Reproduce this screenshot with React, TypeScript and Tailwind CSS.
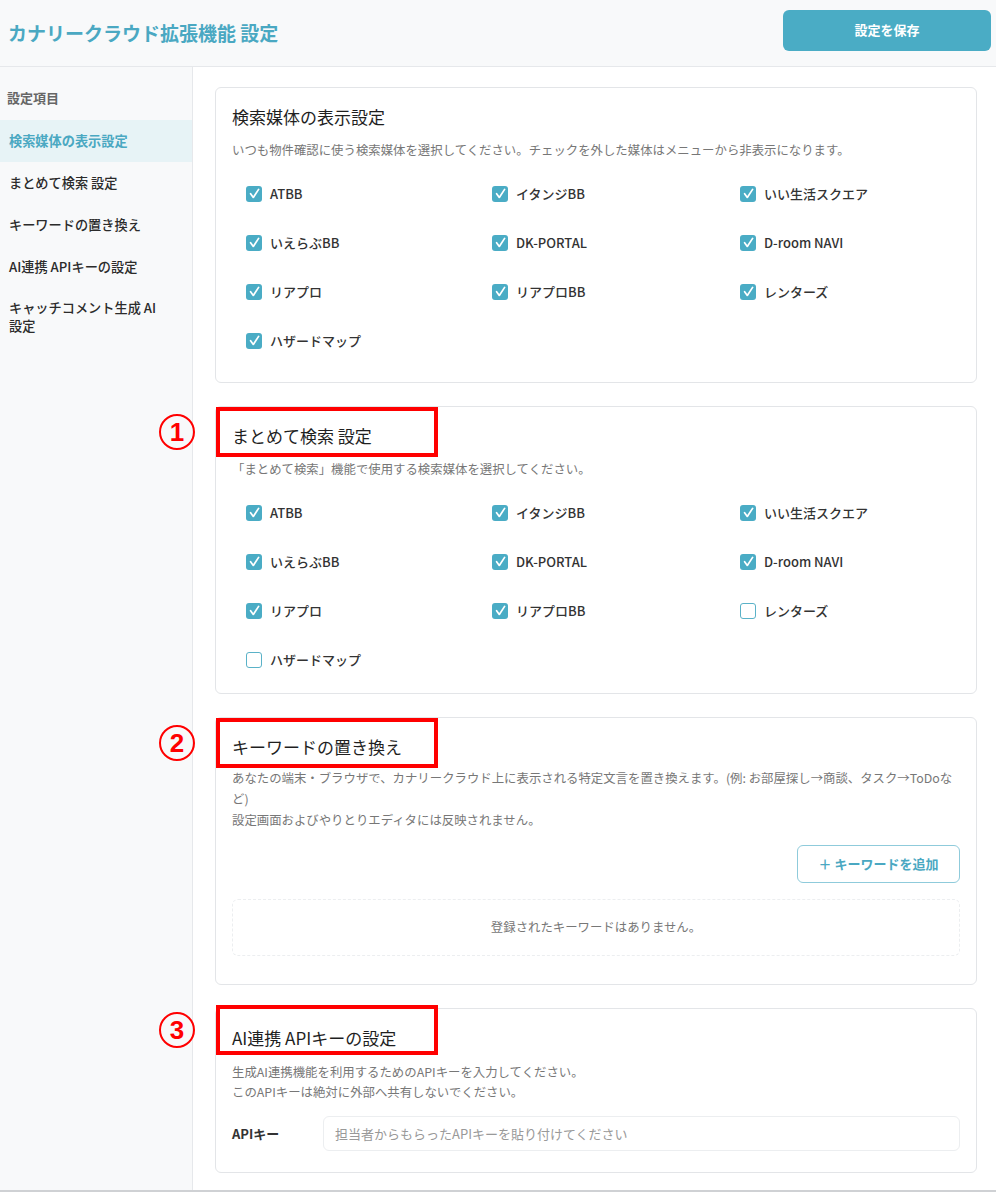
import React from "react";

const FONT = '"Noto Sans CJK JP", "Noto Sans", sans-serif';

type Item = { label: string; checked: boolean };

function Check({ checked }: { checked: boolean }) {
  if (checked) {
    return (
      <span className="flex h-[16px] w-[16px] shrink-0 items-center justify-center rounded-[3px] bg-[#4aacc5]">
        <svg width="13" height="13" viewBox="0 0 12 12" fill="none">
          <path d="M2.4 6.2 L4.9 9.6 L9.8 2.2" stroke="white" strokeWidth="1.6" strokeLinecap="round" strokeLinejoin="round" />
        </svg>
      </span>
    );
  }
  return <span className="h-[16px] w-[16px] shrink-0 rounded-[3px] border-[1.5px] border-[#5ab2c8] bg-white" />;
}

function CheckGrid({ items }: { items: Item[] }) {
  return (
    <div className="mt-[9px] grid grid-cols-[246px_248px_1fr] pl-[14px]">
      {items.map((it) => (
        <div key={it.label} className="flex h-[49px] items-center gap-[8px]">
          <Check checked={it.checked} />
          <span className="text-[13px] font-medium text-[#333]">{it.label}</span>
        </div>
      ))}
    </div>
  );
}

function Marker({ n, top }: { n: string; top: string }) {
  return (
    <div className={`pointer-events-none absolute left-0 ${top} h-[50px] w-[222px]`}>
      <div className="absolute inset-0 border-[4px] border-[#ff0000]" />
      <div className="absolute left-[-57px] top-1/2 flex h-[36px] w-[36px] -translate-y-1/2 items-center justify-center rounded-full border-[2px] border-[#ff0000]">
        <span className="text-[26px] font-bold leading-none text-[#ff0000]" style={{ fontFamily: '"Liberation Sans", Arial, sans-serif' }}>
          {n}
        </span>
      </div>
    </div>
  );
}

const names = ["ATBB", "イタンジBB", "いい生活スクエア", "いえらぶBB", "DK-PORTAL", "D-room NAVI", "リアプロ", "リアプロBB", "レンターズ", "ハザードマップ"];

export default function App() {
  const items1 = names.map((l) => ({ label: l, checked: true }));
  const items2 = names.map((l) => ({ label: l, checked: !(l === "レンターズ" || l === "ハザードマップ") }));
  const sideItems = ["まとめて検索 設定", "キーワードの置き換え", "AI連携 APIキーの設定"];

  return (
    <div className="min-h-[1192px] w-[996px] bg-white" style={{ fontFamily: FONT }}>
      <header className="flex h-[67px] items-center justify-between border-b border-[#e6e8eb] bg-[#f8f9fa] pl-[8px] pr-[5px]">
        <h1 className="text-[19px] font-bold text-[#4aa8c2]">カナリークラウド拡張機能 設定</h1>
        <button className="mb-[6px] h-[41px] w-[208px] rounded-[6px] bg-[#4aacc5] text-[13px] font-bold text-white">設定を保存</button>
      </header>
      <div className="flex border-b-2 border-[#cfd1d4]">
        <aside className="w-[193px] shrink-0 border-r border-[#e6e8eb] bg-[#f8f9fa]">
          <div className="px-[7px] pt-[21px] pb-[12px] text-[13px] font-bold text-[#666]">設定項目</div>
          <div className="flex h-[42px] items-center bg-[#e7f3f6] px-[9px] text-[13.2px] font-bold text-[#4aa8c2]">検索媒体の表示設定</div>
          {sideItems.map((s) => (
            <div key={s} className="flex h-[42px] items-center px-[9px] text-[13.2px] font-medium text-[#2b2b2b]">
              {s}
            </div>
          ))}
          <div className="pl-[9px] pr-[28px] pt-[11px] text-[13.2px] font-medium leading-[18px] text-[#2b2b2b]">キャッチコメント生成 AI 設定</div>
        </aside>
        <main className="flex flex-1 flex-col gap-[23px] pl-[22px] pr-[19px] pt-[20px] pb-[17px]">
          {/* Card 1 */}
          <section className="relative rounded-[6px] border border-[#e3e5e8] bg-white px-[16px] pt-[17px] pb-[17px]">
            <h2 className="text-[17px] font-normal leading-[24px] text-[#1f1f1f]">検索媒体の表示設定</h2>
            <p className="mt-[11px] text-[12.4px] leading-[20px] text-[#777]">いつも物件確認に使う検索媒体を選択してください。チェックを外した媒体はメニューから非表示になります。</p>
            <CheckGrid items={items1} />
          </section>
          {/* Card 2 */}
          <section className="relative rounded-[6px] border border-[#e3e5e8] bg-white px-[16px] pt-[17px] pb-[9px]">
            <h2 className="text-[17px] font-normal leading-[24px] text-[#1f1f1f]">まとめて検索 設定</h2>
            <p className="mt-[11px] text-[12.4px] leading-[20px] text-[#777]">「まとめて検索」機能で使用する検索媒体を選択してください。</p>
            <CheckGrid items={items2} />
            <Marker n="1" top="top-[0px]" />
          </section>
          {/* Card 3 */}
          <section className="relative rounded-[6px] border border-[#e3e5e8] bg-white px-[16px] pt-[17px] pb-[28px]">
            <h2 className="text-[17px] font-normal leading-[24px] text-[#1f1f1f]">キーワードの置き換え</h2>
            <p className="mt-[9px] text-[12.4px] leading-[21px] text-[#777]">
              あなたの端末・ブラウザで、カナリークラウド上に表示される特定文言を置き換えます。(例: お部屋探し→商談、タスク→ToDoなど)
              <br />
              設定画面およびやりとりエディタには反映されません。
            </p>
            <div className="mt-[14px] flex justify-end">
              <button className="h-[38px] w-[163px] rounded-[6px] border border-[#8fcbdb] bg-white text-[13px] font-bold text-[#4aa8c2]">＋ キーワードを追加</button>
            </div>
            <div className="mt-[16px] flex h-[57px] items-center justify-center rounded-[6px] border border-dashed border-[#eceef0] text-[12.4px] text-[#777]">
              登録されたキーワードはありません。
            </div>
            <Marker n="2" top="top-[0px]" />
          </section>
          {/* Card 4 */}
          <section className="relative rounded-[6px] border border-[#e3e5e8] bg-white px-[16px] pt-[17px] pb-[21px]">
            <h2 className="text-[17px] font-normal leading-[24px] text-[#1f1f1f]">AI連携 APIキーの設定</h2>
            <p className="mt-[12px] text-[12.4px] leading-[20px] text-[#777]">
              生成AI連携機能を利用するためのAPIキーを入力してください。
              <br />
              このAPIキーは絶対に外部へ共有しないでください。
            </p>
            <div className="mt-[14px] flex items-center">
              <label className="w-[91px] shrink-0 text-[13px] font-bold text-[#333]">APIキー</label>
              <input
                className="h-[35px] flex-1 rounded-[6px] border border-[#eceef0] px-[11px] text-[13px] text-[#333] outline-none placeholder:text-[#999]"
                placeholder="担当者からもらったAPIキーを貼り付けてください"
                style={{ fontFamily: FONT }}
              />
            </div>
            <Marker n="3" top="top-[-4px]" />
          </section>
        </main>
      </div>
    </div>
  );
}
